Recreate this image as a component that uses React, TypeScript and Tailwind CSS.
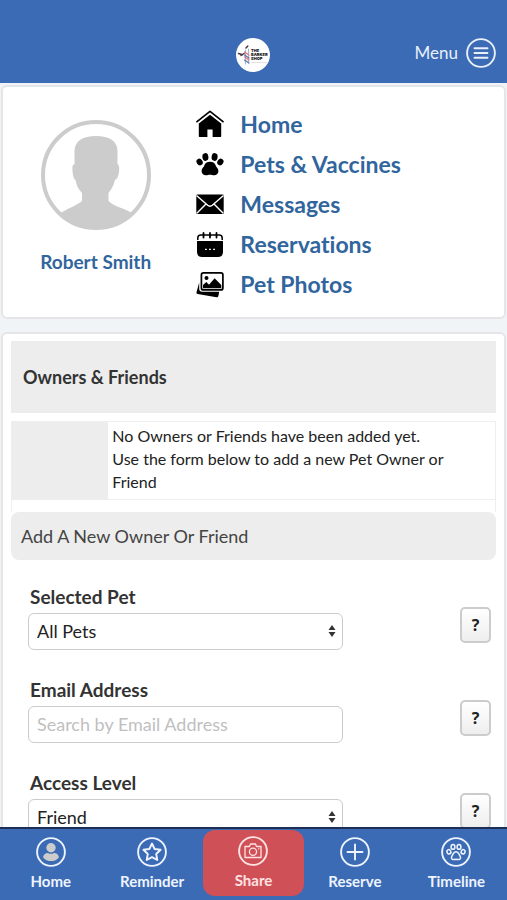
import type { ReactNode } from 'react';

const HomeIcon = () => (
  <svg viewBox="0 0 28 28" className="size-7" aria-hidden="true">
    <path d="M1 11.6 14 1.3 27 11.6" fill="none" stroke="#000" strokeWidth="1.7" strokeLinecap="round" strokeLinejoin="round" />
    <path d="M14 4.800 25.200 13.600v12.600q0 .8-.8.8H16.600v-7.400h-5.200V27H3.600q-.8 0-.8-.8V13.600Z" />
  </svg>
);

const PawIcon = () => (
  <svg viewBox="0 0 28 28" className="size-7" aria-hidden="true">
    <ellipse cx="3.6" cy="12" rx="2.900" ry="3.500" transform="rotate(-35 3.6 12)" />
    <ellipse cx="9.400" cy="7" rx="3" ry="3.900" transform="rotate(-8 9.400 7)" />
    <ellipse cx="18.6" cy="7" rx="3" ry="3.900" transform="rotate(8 18.6 7)" />
    <ellipse cx="24.4" cy="12" rx="2.900" ry="3.500" transform="rotate(35 24.4 12)" />
    <path d="M14 11.8c3.200 0 5 1.500 5.800 4 .6 1.700 2.600 2.600 2.600 5.200 0 2.500-1.700 4.300-4.300 4.300-1.700 0-2.400-.5-4.100-.5s-2.400.5-4.100.5c-2.600 0-4.300-1.800-4.300-4.300 0-2.600 2-3.500 2.600-5.200.8-2.500 2.600-4 5.800-4Z" />
  </svg>
);

const MailIcon = () => (
  <svg viewBox="0 0 28 28" className="size-7" aria-hidden="true">
    <rect x=".3" y="4.500" width="27.400" height="19.500" rx="1" />
    <path d="m.5 5.500 11.200 9.800q2.300 1.900 4.600 0L27.500 5.500M.8 23.300l9.200-9.200M27.200 23.300 18 14.100" fill="none" stroke="#fff" strokeWidth="1.400" />
  </svg>
);

const CalendarIcon = () => (
  <svg viewBox="0 0 28 28" className="size-7" aria-hidden="true">
    <path d="M1 11h26v11q0 5-5 5H6q-5 0-5-5Z" />
    <path d="M1.800 10V8q0-3 3-3h18.400q3 0 3 3v2" fill="none" stroke="#000" strokeWidth="1.500" />
    <path d="M7.500 3v4.500M14 3v4.500M20.500 3v4.500" stroke="#000" strokeWidth="1.800" strokeLinecap="round" />
    <path d="M9 19.400h1.800M13.100 19.400h1.800M17.200 19.400H19" stroke="#fff" strokeWidth="1.400" />
  </svg>
);

const PhotosIcon = () => (
  <svg viewBox="0 0 28 28" className="size-7" aria-hidden="true">
    <path d="M3.200 12.500v6.300q0 3 3 3h17l-.8 4.200q-.3 1.600-1.900 1.300L1.700 24Q.2 23.700.5 22.200Z" />
    <rect x="5.400" y="2.900" width="21.500" height="17" rx="2" fill="#fff" stroke="#000" strokeWidth="1.700" />
    <circle cx="10.500" cy="8" r="2" />
    <path d="M7 18.300v-3.200l3.300-3 2.700 2.600 5.600-6.400 6.700 6.700v3.300Z" />
  </svg>
);

const menuLinks = [
  { label: 'Home', icon: <HomeIcon /> },
  { label: 'Pets & Vaccines', icon: <PawIcon /> },
  { label: 'Messages', icon: <MailIcon /> },
  { label: 'Reservations', icon: <CalendarIcon /> },
  { label: 'Pet Photos', icon: <PhotosIcon /> },
];

const Logo = () => (
  <svg viewBox="0 0 34 34" className="size-[34px]" role="img" aria-label="The Barker Shop">
    <circle cx="17" cy="17" r="17" fill="#fff" />
    <g fill="none" strokeLinecap="round">
      <path d="M9.500 12v14M12.500 11v14" stroke="#a9b5cf" strokeWidth="1.200" />
      <path d="m8.500 14 4.500 3M8.500 19l4.500 3" stroke="#df7c84" strokeWidth="1.400" />
      <path d="m8.500 17 4.500 3M8.500 22l4.500 3" stroke="#5b78ae" strokeWidth="1.200" />
      <path d="m2.500 15.500 4 1.200M5 17.500l3-2M10 10l1.800-2" stroke="#4a3539" strokeWidth="1.500" />
    </g>
    <g fill="#222" fontFamily="Inter, sans-serif" fontWeight="900" fontSize="4">
      <text x="15" y="14">THE</text>
      <text x="15" y="18">BARKER</text>
      <text x="15" y="22">SHOP</text>
    </g>
    <path d="M15 24.500h16" stroke="#d9c9c9" strokeWidth=".6" />
  </svg>
);

const Ring = ({ children }: { children: ReactNode }) => (
  <svg
    viewBox="0 0 30 30"
    className="size-[30px]"
    fill="none"
    stroke="currentColor"
    strokeWidth="1.900"
    strokeLinecap="round"
    strokeLinejoin="round"
    aria-hidden="true"
  >
    <circle cx="15" cy="15" r="13.900" />
    {children}
  </svg>
);

const tabs = [
  {
    label: 'Home',
    icon: (
      <g fill="#ccc" stroke="none">
        <circle cx="15" cy="10.700" r="4.700" />
        <path d="M7.200 20.500c0-3.200 2.800-4.600 4.800-4.600 1.900 1.200 4.100 1.200 6 0 2 0 4.800 1.400 4.800 4.600-1.600 2.500-4.500 3.600-7.800 3.600s-6.200-1.100-7.800-3.600Z" />
      </g>
    ),
  },
  {
    label: 'Reminder',
    icon: <path d="m15 6.500 2.600 5.500 6 .8-4.400 4.200 1.100 6-5.300-2.900L9.700 23l1.100-6-4.400-4.200 6-.8Z" />,
  },
  {
    label: 'Share',
    active: true,
    icon: (
      <g strokeWidth="1.300">
        <path d="M7 10.500h4.500l1-2.500h5l1 2.500H23v11H7Z" />
        <circle cx="15" cy="15.700" r="3.600" />
        <path d="M20.500 12.800h.4" />
      </g>
    ),
  },
  { label: 'Reserve', icon: <path d="M15 7.500v15M7.500 15h15" /> },
  {
    label: 'Timeline',
    icon: (
      <g strokeWidth="1.500">
        <ellipse cx="7.900" cy="14.800" rx="1.900" ry="2.200" transform="rotate(-25 7.900 14.800)" />
        <ellipse cx="12" cy="9.900" rx="1.900" ry="2.400" />
        <ellipse cx="18" cy="9.900" rx="1.900" ry="2.400" />
        <ellipse cx="22.100" cy="14.800" rx="1.900" ry="2.200" transform="rotate(25 22.100 14.800)" />
        <path d="M15 14.700c2.200 0 2.700 1.800 3.500 3.300.7 1.300 1.300 2 1 3.200-.6 2-2.700 1.500-4.500 1.100-1.800.4-3.900.9-4.500-1.100-.3-1.200.3-1.900 1-3.200.8-1.500 1.300-3.300 3.500-3.300Z" />
      </g>
    ),
  },
];

interface FieldProps {
  id: string;
  label: string;
  children: ReactNode;
}

const Field = ({ id, label, children }: FieldProps) => (
  <div className="mb-6 flex items-center justify-between">
    <div className="w-[68%]">
      <label htmlFor={id} className="block pl-[2px] text-[19px] leading-8 font-bold text-[#333]">
        {label}
      </label>
      <div className="relative">{children}</div>
    </div>
    <button
      type="button"
      aria-label={`Help for ${label}`}
      className="mt-5 h-9 w-[31px] cursor-pointer rounded-[5px] border-2 border-[#ccc] bg-linear-to-b from-white to-[#eee] font-['Open_Sans',sans-serif] text-base leading-none font-bold text-[#222]"
    >
      ?
    </button>
  </div>
);

const SelectBox = ({ id, option }: { id: string; option: string }) => (
  <>
    <select
      id={id}
      className="block h-[37px] w-full appearance-none rounded-md border border-[#ccc] bg-white px-2 text-lg text-[#222]"
    >
      <option>{option}</option>
    </select>
    <svg viewBox="0 0 8 12" className="pointer-events-none absolute top-3 right-[7px] h-3 w-2" fill="#333" aria-hidden="true">
      <path d="M4 0 7.500 5h-7ZM4 12 .5 7h7Z" />
    </svg>
  </>
);

const App = () => {
  return (
    <div className="flex h-screen flex-col bg-[#f1f4f7] font-[Lato,'Open_Sans',sans-serif] [font-variant-ligatures:none]">
      <header className="grid shrink-0 grid-cols-3 items-center bg-[#3b6bb5] px-[11px] pt-[38px] pb-[11px]">
        <a href="#" className="col-start-2 justify-self-center">
          <Logo />
        </a>
        <button type="button" className="flex cursor-pointer items-center gap-2 justify-self-end pb-1 text-[17px] leading-7 text-[#e9f0fb]">
          Menu
          <Ring>
            <path d="M8.500 10.200h13M8.500 15h13M8.500 19.800h13" />
          </Ring>
        </button>
      </header>

      <main className="min-h-0 flex-1 overflow-y-auto px-[1px] pt-[2px] [scrollbar-width:none]">
        <section className="flex rounded-md border-2 border-[#e5e5e7] bg-white pt-[17px] pb-[13px]">
          <div className="flex w-[37%] flex-col items-center pt-4">
            <svg viewBox="0 0 110 110" className="size-[110px]" role="img" aria-label="Profile picture">
              <clipPath id="avatar">
                <circle cx="55" cy="55" r="54" />
              </clipPath>
              <path
                clipPath="url(#avatar)"
                fill="#ccc"
                d="M55 16c13 0 21.500 5 21.500 15v13c2 1 1.800 4 1.500 8-.4 4-2 7-4 8-1.500 6-3.500 9-6.500 13v8c6 6 16 7 25 13v20H18V94c9-6 17-8 23-13v-8c-4-4-5.500-8-6.500-13-2-1-2.600-5-3-9-.3-4-.2-6 2-7V31c0-10 8.500-15 21.500-15Z"
              />
              <circle cx="55" cy="55" r="53" fill="none" stroke="#ccc" strokeWidth="4" />
            </svg>
            <a href="#" className="mt-[18px] text-[19px] leading-7 font-bold text-[#31659d]">
              Robert Smith
            </a>
          </div>
          <nav className="flex-1 pl-2">
            <ul>
              {menuLinks.map((link) => (
                <li key={link.label}>
                  <a href="#" className="flex h-10 items-center gap-4 text-[23px] font-bold text-[#31659d]">
                    {link.icon}
                    {link.label}
                  </a>
                </li>
              ))}
            </ul>
          </nav>
        </section>

        <section className="mt-[13px] rounded-md border-2 border-[#e5e5e7] bg-white px-2 pt-[7px] pb-6">
          <h1 className="bg-[#ededed] px-3 py-[22px] text-lg leading-7 font-bold text-[#333]">Owners &amp; Friends</h1>
          <table className="mt-2 w-full border-x border-t border-[#eee] text-base leading-[23px] text-[#222]">
            <tbody>
              <tr className="border-b border-[#eee]">
                <td className="w-1/5 bg-[#ededed]" />
                <td className="pt-[2px] pr-6 pb-[6px] pl-1">
                  No Owners or Friends have been added yet.
                  <br />
                  Use the form below to add a new Pet Owner or Friend
                </td>
              </tr>
              <tr>
                <td colSpan={2} className="h-3" />
              </tr>
            </tbody>
          </table>
          <h2 className="rounded-lg bg-[#ededed] px-[10px] py-[10px] text-lg leading-7 text-[#444]">Add A New Owner Or Friend</h2>

          <form className="mt-[21px] pr-[5px] pl-[17px]">
            <Field id="pet" label="Selected Pet">
              <SelectBox id="pet" option="All Pets" />
            </Field>
            <Field id="email" label="Email Address">
              <input
                id="email"
                type="email"
                placeholder="Search by Email Address"
                className="block h-[37px] w-full rounded-md border border-[#ccc] bg-white px-2 text-lg text-[#222] placeholder:text-[#bfbfbf]"
              />
            </Field>
            <Field id="access" label="Access Level">
              <SelectBox id="access" option="Friend" />
            </Field>
          </form>
        </section>
      </main>

      <nav className="shrink-0 border-t-2 border-[#1d2f52] bg-[#3b6bb5] pt-[1px] pb-1">
        <ul className="grid grid-cols-5">
          {tabs.map((tab) => (
            <li key={tab.label}>
              <a
                href="#"
                className={`flex h-[66px] flex-col items-center gap-[2px] text-[15px] leading-6 font-bold ${
                  tab.active ? 'rounded-xl bg-[#d05058] pt-[6px] text-[#ffe3e3]' : 'pt-[7px] text-[#eef4ff]'
                }`}
              >
                <Ring>{tab.icon}</Ring>
                {tab.label}
              </a>
            </li>
          ))}
        </ul>
      </nav>
    </div>
  );
};

export default App;
